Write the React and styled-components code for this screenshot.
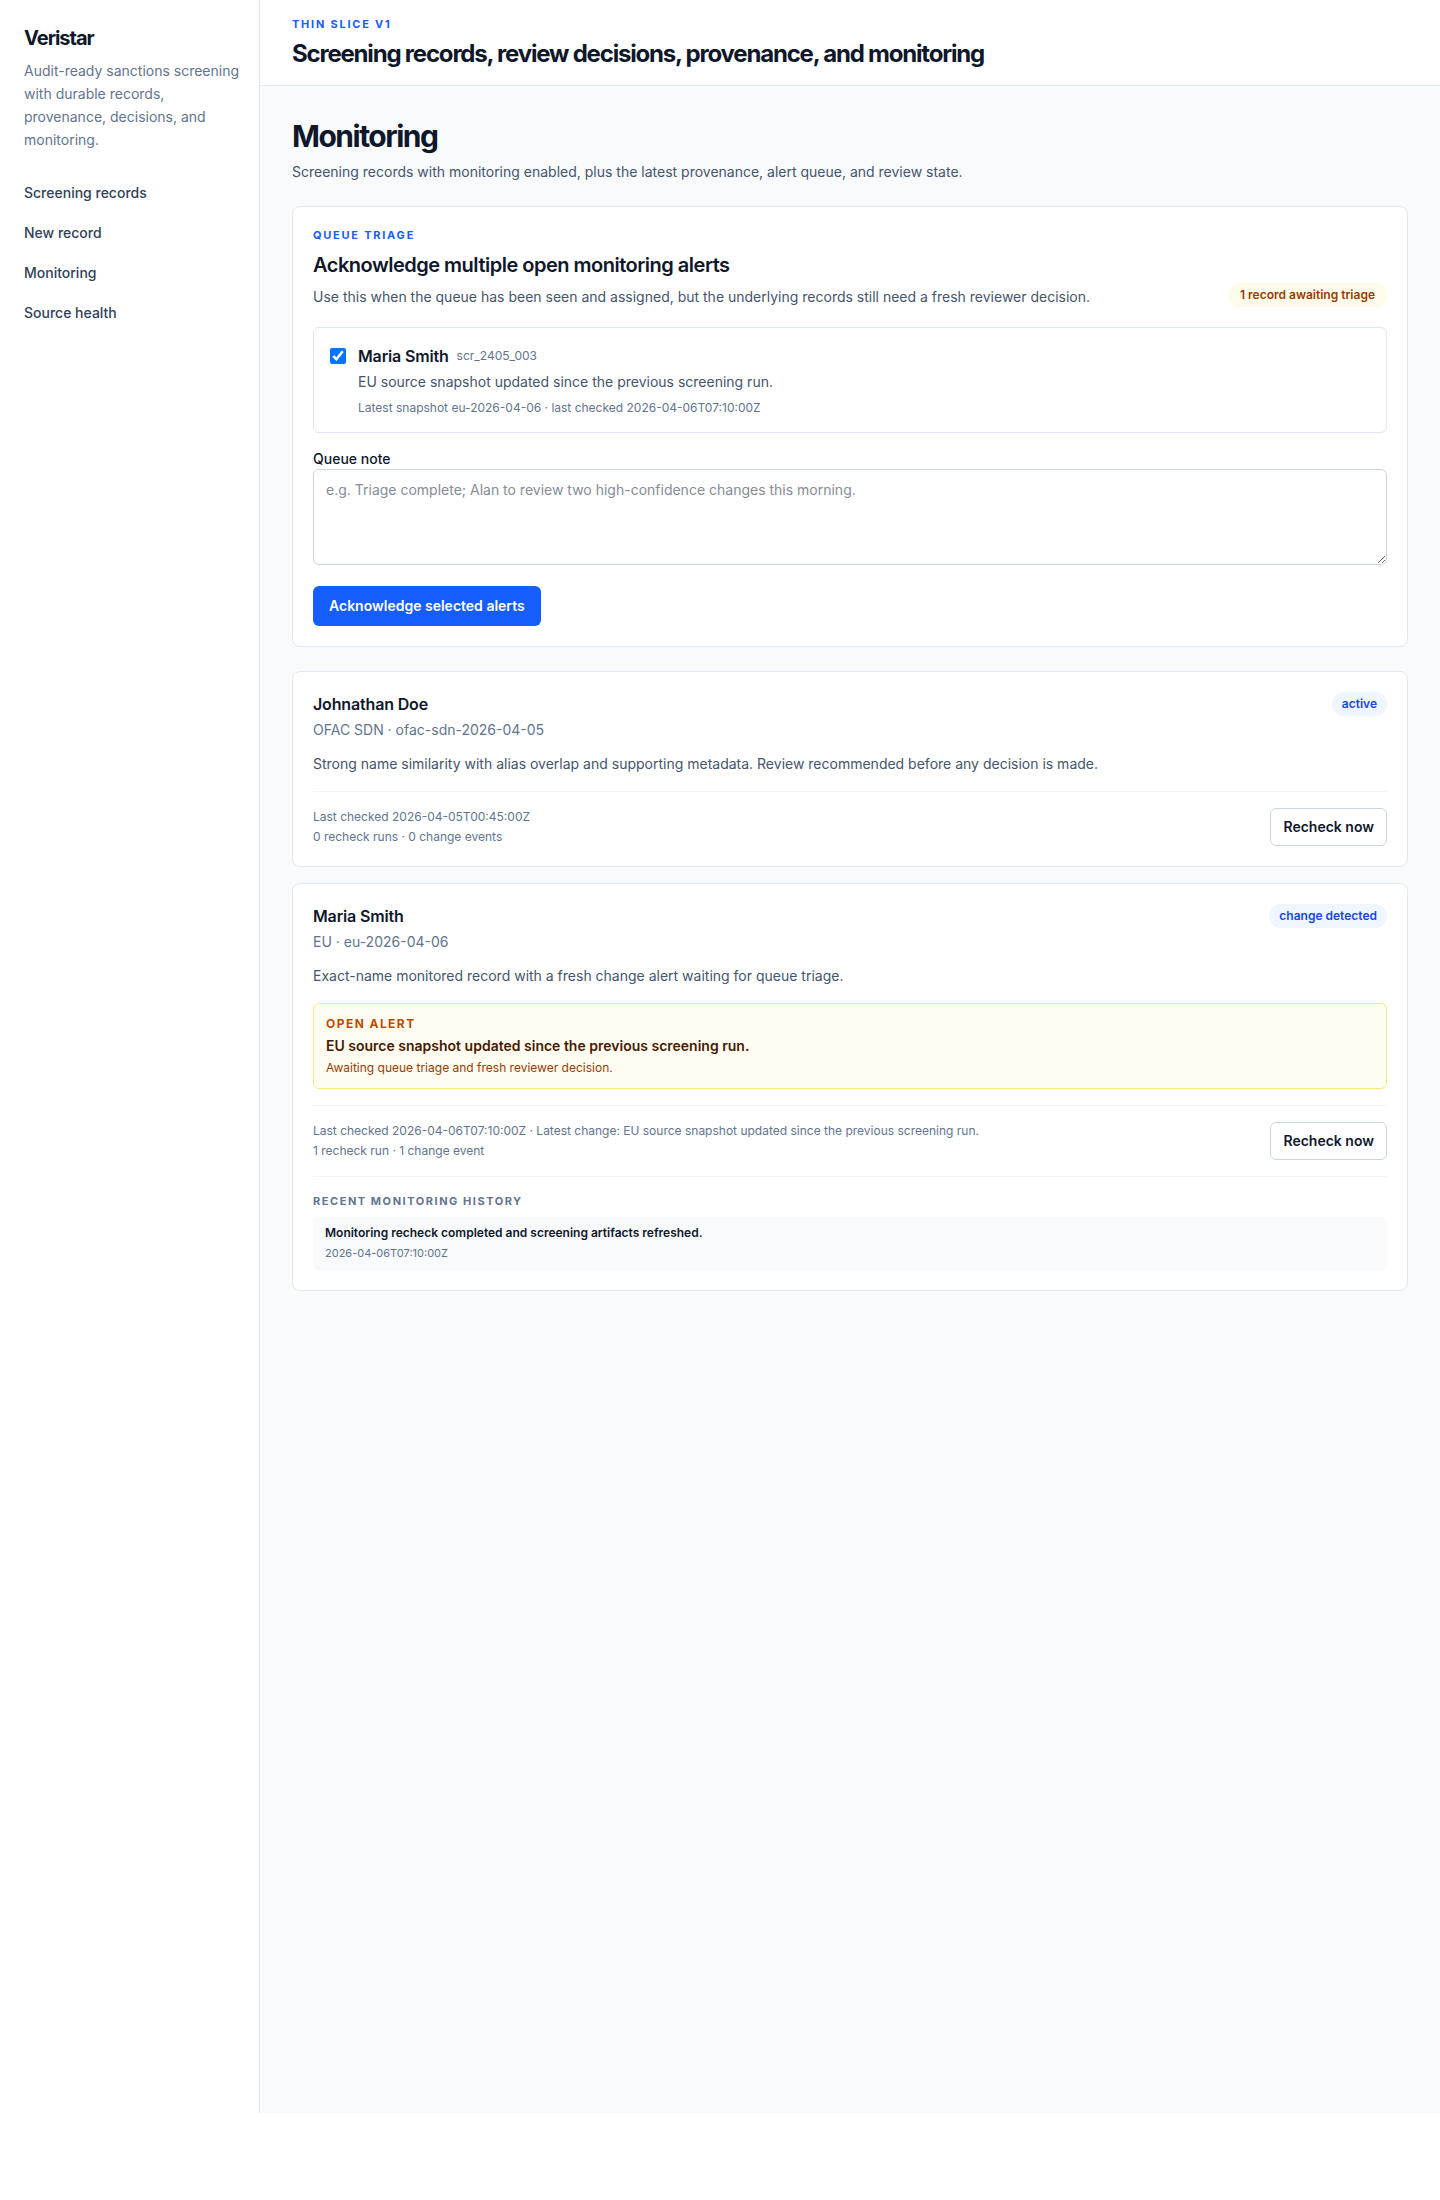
import React, { useState } from 'react';
import styled, { createGlobalStyle } from 'styled-components';

const NAV_ITEMS = ['Screening records', 'New record', 'Monitoring', 'Source health'];

const OPEN_ALERTS = [
  {
    id: 'scr_2405_003',
    name: 'Maria Smith',
    message: 'EU source snapshot updated since the previous screening run.',
    snapshot: 'eu-2026-04-06',
    lastChecked: '2026-04-06T07:10:00Z',
  },
];

const RECORDS = [
  {
    id: 'scr_2405_001',
    name: 'Johnathan Doe',
    source: 'OFAC SDN · ofac-sdn-2026-04-05',
    status: 'active',
    summary:
      'Strong name similarity with alias overlap and supporting metadata. Review recommended before any decision is made.',
    checked: 'Last checked 2026-04-05T00:45:00Z',
    counts: '0 recheck runs · 0 change events',
    history: [],
  },
  {
    id: 'scr_2405_003',
    name: 'Maria Smith',
    source: 'EU · eu-2026-04-06',
    status: 'change detected',
    summary: 'Exact-name monitored record with a fresh change alert waiting for queue triage.',
    alert: 'EU source snapshot updated since the previous screening run.',
    checked:
      'Last checked 2026-04-06T07:10:00Z · Latest change: EU source snapshot updated since the previous screening run.',
    counts: '1 recheck run · 1 change event',
    history: [
      {
        text: 'Monitoring recheck completed and screening artifacts refreshed.',
        at: '2026-04-06T07:10:00Z',
      },
    ],
  },
];

function QueueTriage() {
  const [selected, setSelected] = useState(OPEN_ALERTS.map((alert) => alert.id));
  const [note, setNote] = useState('');

  const toggleAlert = (id) => {
    setSelected((prev) => (prev.includes(id) ? prev.filter((v) => v !== id) : [...prev, id]));
  };

  return (
    <Card as='form' onSubmit={(e) => e.preventDefault()}>
      <TriageHeader>
        <div>
          <Eyebrow>Queue triage</Eyebrow>
          <TriageTitle>Acknowledge multiple open monitoring alerts</TriageTitle>
          <Lead>
            Use this when the queue has been seen and assigned, but the underlying records still
            need a fresh reviewer decision.
          </Lead>
        </div>
        <Badge $tone='amber'>1 record awaiting triage</Badge>
      </TriageHeader>
      {OPEN_ALERTS.map((alert) => (
        <AlertOption key={alert.id}>
          <Checkbox
            type='checkbox'
            checked={selected.includes(alert.id)}
            onChange={() => toggleAlert(alert.id)}
          />
          <AlertText>
            <AlertName>
              {alert.name}
              <Small>{alert.id}</Small>
            </AlertName>
            <AlertMessage>{alert.message}</AlertMessage>
            <Small>
              Latest snapshot {alert.snapshot} · last checked {alert.lastChecked}
            </Small>
          </AlertText>
        </AlertOption>
      ))}
      <Field>
        <FieldLabel htmlFor='queue-note'>Queue note</FieldLabel>
        <NoteInput
          id='queue-note'
          value={note}
          onChange={(e) => setNote(e.target.value)}
          placeholder='e.g. Triage complete; Alan to review two high-confidence changes this morning.'
        />
      </Field>
      <PrimaryButton type='submit'>Acknowledge selected alerts</PrimaryButton>
    </Card>
  );
}

function RecordCard({ record }) {
  return (
    <Card as='article'>
      <RecordHeader>
        <div>
          <RecordName>{record.name}</RecordName>
          <RecordSource>{record.source}</RecordSource>
        </div>
        <Badge $tone='blue'>{record.status}</Badge>
      </RecordHeader>
      <Summary>{record.summary}</Summary>
      {record.alert && (
        <OpenAlert>
          <OpenAlertLabel>Open alert</OpenAlertLabel>
          <OpenAlertTitle>{record.alert}</OpenAlertTitle>
          <OpenAlertHint>Awaiting queue triage and fresh reviewer decision.</OpenAlertHint>
        </OpenAlert>
      )}
      <RecordFooter>
        <FooterText>
          <Small>{record.checked}</Small>
          <Small>{record.counts}</Small>
        </FooterText>
        <SecondaryButton type='button'>Recheck now</SecondaryButton>
      </RecordFooter>
      {record.history.length > 0 && (
        <History>
          <HistoryTitle>Recent monitoring history</HistoryTitle>
          {record.history.map((entry) => (
            <HistoryItem key={entry.at}>
              <HistoryText>{entry.text}</HistoryText>
              <HistoryTime>{entry.at}</HistoryTime>
            </HistoryItem>
          ))}
        </History>
      )}
    </Card>
  );
}

export default function App() {
  return (
    <>
      <GlobalStyle />
      <Shell>
        <Sidebar>
          <Brand>Veristar</Brand>
          <Tagline>
            Audit-ready sanctions screening with durable records, provenance, decisions, and
            monitoring.
          </Tagline>
          <Nav>
            {NAV_ITEMS.map((item) => (
              <NavLink key={item} href='#'>
                {item}
              </NavLink>
            ))}
          </Nav>
        </Sidebar>
        <Content>
          <TopBar>
            <Eyebrow>Thin slice v1</Eyebrow>
            <TopTitle>Screening records, review decisions, provenance, and monitoring</TopTitle>
          </TopBar>
          <Main>
            <div>
              <PageTitle>Monitoring</PageTitle>
              <Lead>
                Screening records with monitoring enabled, plus the latest provenance, alert queue,
                and review state.
              </Lead>
            </div>
            <QueueTriage />
            <RecordList>
              {RECORDS.map((record) => (
                <RecordCard key={record.id} record={record} />
              ))}
            </RecordList>
          </Main>
        </Content>
      </Shell>
    </>
  );
}

const GlobalStyle = createGlobalStyle`
  *, *::before, *::after {
    box-sizing: border-box;
  }

  body {
    margin: 0;
    background: #ffffff;
    color: #0f172b;
    font-family: Inter, 'Liberation Sans', sans-serif;
    font-size: 14px;
    line-height: 20px;
  }

  h1, h2, h3, h4, p {
    margin: 0;
  }

  button, input, textarea {
    font: inherit;
    color: inherit;
  }
`;

const Shell = styled.div`
  display: grid;
  grid-template-columns: 260px minmax(0, 1fr);
  min-height: calc(100vh - 87px);
`;

const Sidebar = styled.aside`
  padding: 24px 16px 24px 24px;
  border-right: 1px solid #e2e8f0;
`;

const Brand = styled.p`
  font-size: 20px;
  line-height: 28px;
  font-weight: 700;
  letter-spacing: -0.05em;
`;

const Tagline = styled.p`
  margin-top: 7px;
  line-height: 23px;
  color: #62748e;
`;

const Nav = styled.nav`
  display: flex;
  flex-direction: column;
  gap: 4px;
  margin-top: 24px;
`;

const NavLink = styled.a`
  padding: 8px 0;
  font-weight: 500;
  color: #314158;
  text-decoration: none;

  &:hover {
    color: #155dfc;
  }
`;

const Content = styled.div`
  display: flex;
  flex-direction: column;
  background: #f8fafc;
`;

const TopBar = styled.header`
  display: flex;
  flex-direction: column;
  gap: 6px;
  padding: 16px 32px 15px;
  background: #ffffff;
  border-bottom: 1px solid #e2e8f0;
`;

const Eyebrow = styled.p`
  font-size: 11px;
  line-height: 16px;
  font-weight: 700;
  letter-spacing: 0.16em;
  text-transform: uppercase;
  color: #155dfc;
`;

const TopTitle = styled.p`
  font-size: 24px;
  line-height: 32px;
  font-weight: 700;
  letter-spacing: -0.05em;
`;

const Main = styled.main`
  display: flex;
  flex-direction: column;
  gap: 24px;
  padding: 32px;
`;

const PageTitle = styled.h1`
  font-size: 30px;
  line-height: 36px;
  font-weight: 700;
  letter-spacing: -0.05em;
`;

const Lead = styled.p`
  margin-top: 8px;
  color: #45556c;
`;

const Card = styled.section`
  padding: 20px;
  background: #ffffff;
  border: 1px solid #e2e8f0;
  border-radius: 8px;
`;

const TriageHeader = styled.div`
  display: flex;
  align-items: flex-end;
  justify-content: space-between;
  gap: 16px;
`;

const TriageTitle = styled.h2`
  margin-top: 8px;
  font-size: 20px;
  line-height: 28px;
  font-weight: 600;
  letter-spacing: -0.025em;
`;

const Badge = styled.span`
  flex-shrink: 0;
  padding: 4px ${({ $tone }) => ($tone === 'amber' ? '12px' : '10px')};
  border-radius: 12px;
  font-size: 12px;
  line-height: 16px;
  font-weight: 600;
  color: ${({ $tone }) => ($tone === 'amber' ? '#973c00' : '#1447e6')};
  background: ${({ $tone }) => ($tone === 'amber' ? '#fffbeb' : '#eff6ff')};
`;

const AlertOption = styled.label`
  display: flex;
  align-items: flex-start;
  gap: 12px;
  margin-top: 20px;
  padding: 16px;
  border: 1px solid #e2e8f0;
  border-radius: 6px;
  cursor: pointer;
`;

const Checkbox = styled.input`
  width: 16px;
  height: 16px;
  margin: 4px 0 0;
`;

const AlertText = styled.span`
  display: flex;
  flex-direction: column;
`;

const AlertName = styled.span`
  display: flex;
  align-items: center;
  gap: 8px;
  font-size: 16px;
  line-height: 24px;
  font-weight: 600;
  letter-spacing: -0.01em;
`;

const Small = styled.span`
  font-size: 12px;
  line-height: 16px;
  font-weight: 400;
  letter-spacing: normal;
  color: #62748e;
`;

const AlertMessage = styled.span`
  margin: 4px 0 8px;
  color: #45556c;
`;

const Field = styled.div`
  margin-top: 16px;
`;

const FieldLabel = styled.label`
  display: block;
  font-weight: 500;
`;

const NoteInput = styled.textarea`
  width: 100%;
  height: 96px;
  padding: 10px 12px;
  background: #ffffff;
  border: 1px solid #cad5e2;
  border-radius: 6px;
  resize: vertical;

  &::placeholder {
    color: #878b95;
  }
`;

const PrimaryButton = styled.button`
  height: 40px;
  margin-top: 16px;
  padding: 0 16px;
  background: #155dfc;
  border: none;
  border-radius: 6px;
  font-weight: 600;
  color: #ffffff;
  cursor: pointer;

  &:hover {
    background: #1447e6;
  }
`;

const SecondaryButton = styled.button`
  flex-shrink: 0;
  padding: 8px 12px;
  background: #ffffff;
  border: 1px solid #cad5e2;
  border-radius: 6px;
  font-weight: 600;
  cursor: pointer;

  &:hover {
    background: #f8fafc;
  }
`;

const RecordList = styled.div`
  display: flex;
  flex-direction: column;
  gap: 16px;
`;

const RecordHeader = styled.div`
  display: flex;
  align-items: flex-start;
  justify-content: space-between;
  gap: 16px;
`;

const RecordName = styled.h2`
  font-size: 16px;
  line-height: 24px;
  font-weight: 600;
  letter-spacing: -0.01em;
`;

const RecordSource = styled.p`
  margin-top: 4px;
  color: #62748e;
`;

const Summary = styled.p`
  margin-top: 12px;
  line-height: 23px;
  color: #45556c;
`;

const OpenAlert = styled.div`
  display: flex;
  flex-direction: column;
  gap: 4px;
  margin-top: 16px;
  padding: 12px;
  background: #fffdf1;
  border: 1px solid #fee685;
  border-radius: 6px;
`;

const OpenAlertLabel = styled.p`
  font-size: 12px;
  line-height: 16px;
  font-weight: 700;
  letter-spacing: 0.12em;
  text-transform: uppercase;
  color: #bb4d00;
`;

const OpenAlertTitle = styled.p`
  font-weight: 600;
  color: #461901;
`;

const OpenAlertHint = styled.p`
  font-size: 12px;
  line-height: 16px;
  color: #973c00;
`;

const RecordFooter = styled.div`
  display: flex;
  align-items: center;
  justify-content: space-between;
  gap: 16px;
  margin-top: 16px;
  padding-top: 16px;
  border-top: 1px solid #f1f5f9;
`;

const FooterText = styled.div`
  display: flex;
  flex-direction: column;
  gap: 4px;
`;

const History = styled.div`
  display: flex;
  flex-direction: column;
  gap: 8px;
  margin-top: 16px;
  padding-top: 16px;
  border-top: 1px solid #f1f5f9;
`;

const HistoryTitle = styled.h3`
  font-size: 11px;
  line-height: 16px;
  font-weight: 700;
  letter-spacing: 0.14em;
  text-transform: uppercase;
  color: #62748e;
`;

const HistoryItem = styled.div`
  display: flex;
  flex-direction: column;
  gap: 4px;
  padding: 8px 12px;
  background: #f8fafc;
  border-radius: 6px;
`;

const HistoryText = styled.p`
  font-size: 12px;
  line-height: 16px;
  font-weight: 600;
`;

const HistoryTime = styled.p`
  font-size: 11px;
  line-height: 17px;
  color: #62748e;
`;
